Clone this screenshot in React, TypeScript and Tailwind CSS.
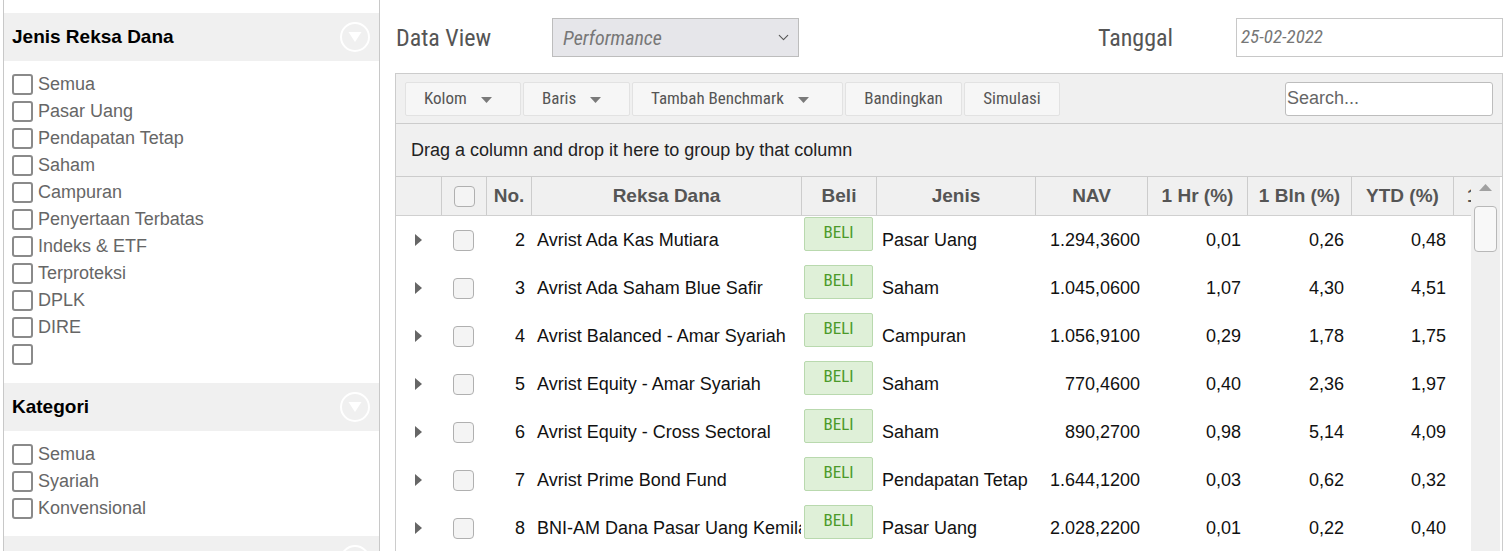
import { ChevronDown } from "lucide-react";

const narrow = "font-['Liberation_Sans_Narrow','Roboto_Condensed','DejaVu_Sans_Condensed',sans-serif]";

const jenis = ["Semua", "Pasar Uang", "Pendapatan Tetap", "Saham", "Campuran", "Penyertaan Terbatas", "Indeks & ETF", "Terproteksi", "DPLK", "DIRE", ""];
const kategori = ["Semua", "Syariah", "Konvensional"];

const rows = [
  { no: 2, name: "Avrist Ada Kas Mutiara", jenis: "Pasar Uang", nav: "1.294,3600", hr: "0,01", bln: "0,26", ytd: "0,48" },
  { no: 3, name: "Avrist Ada Saham Blue Safir", jenis: "Saham", nav: "1.045,0600", hr: "1,07", bln: "4,30", ytd: "4,51" },
  { no: 4, name: "Avrist Balanced - Amar Syariah", jenis: "Campuran", nav: "1.056,9100", hr: "0,29", bln: "1,78", ytd: "1,75" },
  { no: 5, name: "Avrist Equity - Amar Syariah", jenis: "Saham", nav: "770,4600", hr: "0,40", bln: "2,36", ytd: "1,97" },
  { no: 6, name: "Avrist Equity - Cross Sectoral", jenis: "Saham", nav: "890,2700", hr: "0,98", bln: "5,14", ytd: "4,09" },
  { no: 7, name: "Avrist Prime Bond Fund", jenis: "Pendapatan Tetap", nav: "1.644,1200", hr: "0,03", bln: "0,62", ytd: "0,32" },
  { no: 8, name: "BNI-AM Dana Pasar Uang Kemilau", jenis: "Pasar Uang", nav: "2.028,2200", hr: "0,01", bln: "0,22", ytd: "0,40" },
];

function CircleToggle() {
  return (
    <svg width="32" height="32" viewBox="0 0 32 32">
      <circle cx="16" cy="16" r="14" fill="none" stroke="#fff" strokeWidth="2" />
      <path d="M9.5 11 L22.5 11 L16 21 Z" fill="#fff" />
    </svg>
  );
}

function FilterGroup({ title, items, pb }: { title: string; items: string[]; pb: string }) {
  return (
    <div>
      <div className="h-[48px] bg-[#f0f0f0] flex items-center justify-between pl-[8px] pr-[8px]">
        <span className="text-[19px] font-bold text-black">{title}</span>
        <CircleToggle />
      </div>
      <div className={`pt-[10px] ${pb} pl-[8px]`}>
        {items.map((it, i) => (
          <div key={i} className="h-[27px] flex items-center gap-[5px]">
            <span className="w-[21px] h-[21px] border-[2.5px] border-[#8a8a8a] rounded-[3px] bg-white" />
            <span className="text-[18px] text-[#666]">{it}</span>
          </div>
        ))}
      </div>
    </div>
  );
}

function Caret() {
  return (
    <svg width="11" height="6" viewBox="0 0 11 6" className="ml-[14px] mt-[2px]">
      <path d="M0 0 L11 0 L5.5 6 Z" fill="#7a7a7a" />
    </svg>
  );
}

function ToolButton({ label, caret, w }: { label: string; caret?: boolean; w: string }) {
  return (
    <div
      className={`${w} h-[34px] flex items-center ${caret ? "justify-start pl-[18px]" : "justify-center"} bg-[#f6f6f6] border border-[#e2e2e2] rounded-[2px] text-[17px] text-[#555] ${narrow}`}
    >
      {label}
      {caret && <Caret />}
    </div>
  );
}

const cols = ["w-[45px]", "w-[45px]", "w-[45px]", "w-[270px]", "w-[75px]", "w-[159px]", "w-[112px]", "w-[100px]", "w-[104px]", "w-[102px]", "w-[100px]"];
const heads = ["", "", "No.", "Reksa Dana", "Beli", "Jenis", "NAV", "1 Hr (%)", "1 Bln (%)", "YTD (%)", "1 Thn (%)"];

function GridCheck() {
  return <span className="w-[21px] h-[21px] rounded-[4px] border border-[#b0b0b0] bg-[#f4f4f4]" />;
}

export default function App() {
  return (
    <div className="w-[1511px] h-[551px] overflow-hidden bg-white flex font-['Liberation_Sans',Arial,sans-serif]">
      <aside className="ml-[3px] w-[377px] shrink-0 border-x border-[#c8c8c8] pt-[13px]">
        <FilterGroup title="Jenis Reksa Dana" items={jenis} pb="pb-[15px]" />
        <FilterGroup title="Kategori" items={kategori} pb="pb-[14px]" />
        <div className="h-[48px] bg-[#f0f0f0] flex items-center justify-end pr-[8px]">
          <CircleToggle />
        </div>
      </aside>

      <main className="ml-[15px] w-[1108px] shrink-0 pt-[18px]">
        <div className="flex items-center h-[39px]">
          <span className={`w-[157px] pl-[1px] text-[24px] text-[#555] ${narrow}`}>Data View</span>
          <div className="w-[247px] h-[39px] bg-[#e6e6ea] border border-[#bdbdbd] flex items-center justify-between pl-[10px] pr-[6px]">
            <span className={`italic text-[20px] text-[#777] ${narrow}`}>Performance</span>
            <ChevronDown size={17} strokeWidth={1.5} color="#555" />
          </div>
          <div className="flex-1" />
          <span className={`w-[138px] text-[24px] text-[#555] ${narrow}`}>Tanggal</span>
          <div className="w-[267px] h-[39px] border border-[#c8c8c8] flex items-center pl-[4px]">
            <span className={`italic text-[19px] text-[#777] ${narrow}`}>25-02-2022</span>
          </div>
        </div>

        <div className="mt-[16px] border border-[#cccccc] h-[600px]">
          <div className="h-[50px] bg-[#f0f0f0] flex items-center pl-[9px] pr-[9px] gap-[2px] border-b border-[#cccccc]">
            <ToolButton label="Kolom" caret w="w-[116px]" />
            <ToolButton label="Baris" caret w="w-[107px]" />
            <ToolButton label="Tambah Benchmark" caret w="w-[211px]" />
            <ToolButton label="Bandingkan" w="w-[117px]" />
            <ToolButton label="Simulasi" w="w-[96px]" />
            <div className="flex-1" />
            <div className="w-[208px] h-[34px] bg-white border border-[#bdbdbd] rounded-[3px] flex items-center pl-[1px] text-[18px] text-[#666]">
              Search...
            </div>
          </div>

          <div className="h-[53px] bg-[#f0f0f0] flex items-center pl-[15px] text-[18px] text-[#222] border-b border-[#cccccc]">
            Drag a column and drop it here to group by that column
          </div>

          <div className="flex">
            <div className="w-[1075px] overflow-hidden">
              <div className="flex h-[39px] bg-[#f0f0f0] border-b border-[#d0d0d0] w-max">
                {heads.map((h, i) => (
                  <div
                    key={i}
                    className={`${cols[i]} shrink-0 flex items-center ${i === 10 ? "justify-start pl-[13px]" : "justify-center"} text-[19px] font-bold text-[#555] whitespace-nowrap ${i > 0 ? "border-l border-[#cccccc]" : ""}`}
                  >
                    {i === 1 ? <GridCheck /> : h}
                  </div>
                ))}
              </div>
              {rows.map((r) => (
                <div key={r.no} className="flex h-[48px] w-max text-[18px] text-[#111]">
                  <div className={`${cols[0]} flex items-center justify-center`}>
                    <svg width="7" height="12" viewBox="0 0 7 12">
                      <path d="M0 0 L7 6 L0 12 Z" fill="#666" />
                    </svg>
                  </div>
                  <div className={`${cols[1]} flex items-center justify-center`}>
                    <GridCheck />
                  </div>
                  <div className={`${cols[2]} flex items-center justify-end pr-[6px]`}>{r.no}</div>
                  <div className={`${cols[3]} flex items-center pl-[6px] overflow-hidden whitespace-nowrap`}>{r.name}</div>
                  <div className={`${cols[4]} px-[3px] pt-[1px]`}>
                    <div className={`h-[34px] bg-[#dff0d8] border border-[#b9d9ae] rounded-[2px] flex items-center justify-center pb-[3px] text-[17px] text-[#4c9a2a] ${narrow}`}>
                      BELI
                    </div>
                  </div>
                  <div className={`${cols[5]} flex items-center pl-[6px] whitespace-nowrap`}>{r.jenis}</div>
                  <div className={`${cols[6]} flex items-center justify-end pr-[7px]`}>{r.nav}</div>
                  <div className={`${cols[7]} flex items-center justify-end pr-[6px]`}>{r.hr}</div>
                  <div className={`${cols[8]} flex items-center justify-end pr-[7px]`}>{r.bln}</div>
                  <div className={`${cols[9]} flex items-center justify-end pr-[7px]`}>{r.ytd}</div>
                  <div className={cols[10]} />
                </div>
              ))}
            </div>
            <div className="w-[29px] bg-[#efefef] flex flex-col items-center">
              <svg width="13" height="7" viewBox="0 0 13 7" className="mt-[7px]">
                <path d="M0 7 L6.5 0 L13 7 Z" fill="#a0a0a0" />
              </svg>
              <div className="mt-[15px] w-[23px] h-[46px] bg-[#f8f8f8] border border-[#b8b8b8] rounded-[4px]" />
            </div>
          </div>
        </div>
      </main>
    </div>
  );
}
